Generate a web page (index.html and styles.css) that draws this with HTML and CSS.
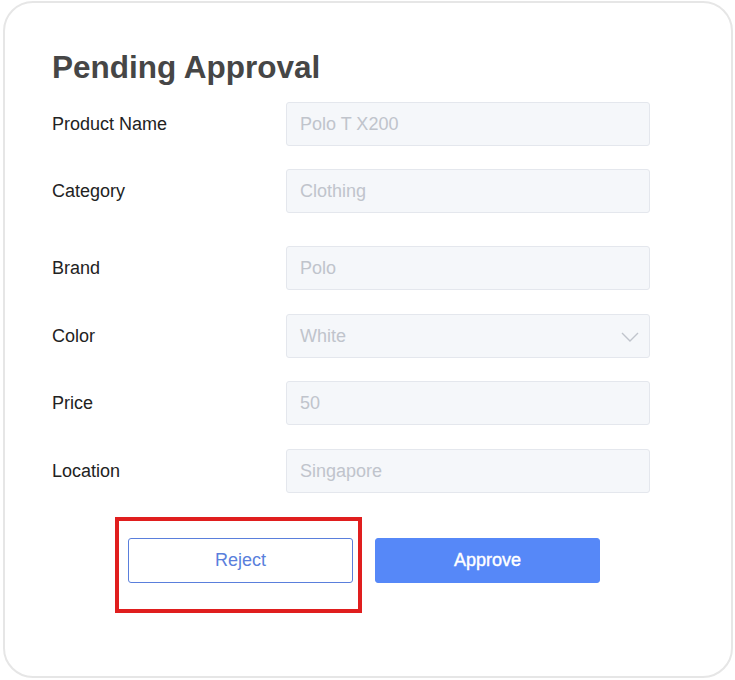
FILE: index.html
```html
<!DOCTYPE html>
<html>
<head>
<meta charset="utf-8">
<link rel="stylesheet" href="styles.css">
</head>
<body>
<div class="card">
  <h1 class="title">Pending Approval</h1>
  <div class="form">
    <div class="row">
      <label class="label">Product Name</label>
      <div class="field"><span class="value">Polo T X200</span></div>
    </div>
    <div class="row row-extra">
      <label class="label">Category</label>
      <div class="field"><span class="value">Clothing</span></div>
    </div>
    <div class="row row-plus">
      <label class="label">Brand</label>
      <div class="field"><span class="value">Polo</span></div>
    </div>
    <div class="row">
      <label class="label">Color</label>
      <div class="field select"><span class="value">White</span>
        <svg class="chev" width="18" height="10" viewBox="0 0 18 10"><path d="M1 1 L9 9 L17 1" fill="none" stroke="#c0c4cc" stroke-width="1.4"/></svg>
      </div>
    </div>
    <div class="row row-plus">
      <label class="label">Price</label>
      <div class="field"><span class="value">50</span></div>
    </div>
    <div class="row">
      <label class="label">Location</label>
      <div class="field"><span class="value">Singapore</span></div>
    </div>
  </div>
  <div class="actions">
    <div class="reject-wrap">
      <button class="btn btn-reject">Reject</button>
      <div class="highlight"></div>
    </div>
    <button class="btn btn-approve">Approve</button>
  </div>
</div>
</body>
</html>
```
FILE: styles.css
```css
* { box-sizing: border-box; }
html, body { margin: 0; padding: 0; background: #ffffff; }
body {
  font-family: "Liberation Sans", Arial, sans-serif;
  padding: 1px 2px 2px 3px;
}
.card {
  width: 730px;
  height: 677px;
  border: 2px solid #e6e6e6;
  border-radius: 30px;
  padding: 46px 0 0 47px;
}
.title {
  margin: 0;
  font-size: 31.5px;
  line-height: 36px;
  font-weight: bold;
  color: #464646;
}
.form {
  margin-top: 17px;
  display: flex;
  flex-direction: column;
  gap: 23px;
}
.row {
  display: flex;
  align-items: center;
  height: 44px;
}
.row-extra { margin-bottom: 10px; }
.row-plus { margin-bottom: 1px; }
.label {
  width: 234px;
  font-size: 18px;
  color: #222222;
}
.field {
  width: 364px;
  height: 44px;
  background: #f5f7fa;
  border: 1px solid #e4e7ed;
  border-radius: 3px;
  display: flex;
  align-items: center;
  justify-content: space-between;
  padding: 0 10px 0 13px;
}
.value {
  font-size: 18px;
  color: #c0c4cc;
}
.chev { display: block; margin-top: 1px; }
.actions {
  display: flex;
  gap: 22px;
  margin-top: 45px;
  padding-left: 76px;
}
.reject-wrap { position: relative; }
.btn {
  width: 225px;
  height: 45px;
  font-family: "Liberation Sans", Arial, sans-serif;
  font-size: 18px;
  border-radius: 3px;
  cursor: pointer;
}
.btn-reject {
  background: #ffffff;
  border: 1px solid #5a7fdc;
  color: #5a7fdc;
}
.btn-approve {
  background: #5688f8;
  border: 1px solid #5688f8;
  color: #ffffff;
  font-weight: normal;
  -webkit-text-stroke: 0.4px #ffffff;
}
.highlight {
  position: absolute;
  left: -13px;
  top: -21px;
  right: -9px;
  bottom: -30px;
  border: 4px solid #e01e1e;
  pointer-events: none;
}
```
